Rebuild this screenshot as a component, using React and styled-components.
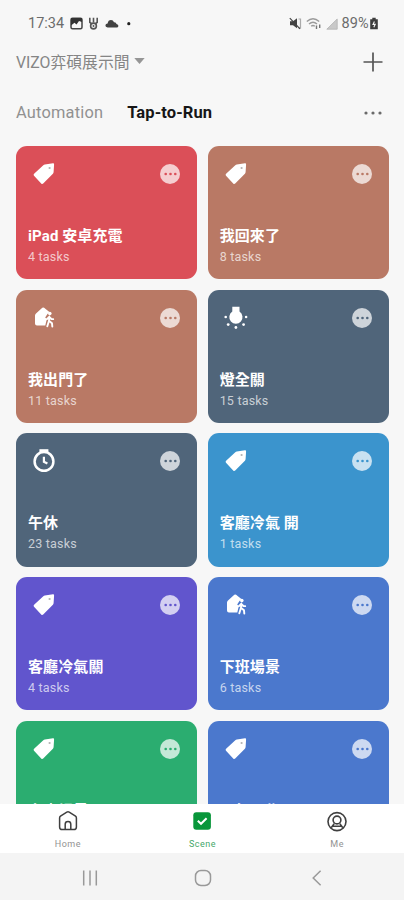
import styled, { createGlobalStyle } from "styled-components";

const GlobalStyle = createGlobalStyle`
  * {
    box-sizing: border-box;
  }

  body {
    margin: 0;
    background-color: #f7f7f7;
    font-family: Roboto, "Noto Sans CJK TC", sans-serif;
  }

  button {
    padding: 0;
    border: none;
    background: none;
    font-family: inherit;
    cursor: pointer;
  }

  svg {
    display: block;
    flex-shrink: 0;
  }
`;

const Screen = styled.div`
  width: 404px;
  height: 900px;
  display: flex;
  flex-direction: column;
  overflow: hidden;
  background-color: #f7f7f7;
`;

const StatusBar = styled.div`
  height: 46px;
  padding: 1px 25px 0 28px;
  display: flex;
  align-items: center;
  justify-content: space-between;
  color: #6c6c6c;
  font-size: 14.5px;
`;

const StatusGroup = styled.div`
  display: flex;
  align-items: center;
  gap: ${(props) => props.$gap}px;
`;

const Header = styled.header`
  height: 33px;
  padding: 0 21px 2px 16px;
  display: flex;
  align-items: center;
  justify-content: space-between;
`;

const HomeName = styled.button`
  padding-top: 2px;
  display: flex;
  align-items: center;
  gap: 5px;
  color: #858585;
  font-size: 15.8px;
  line-height: 24px;
`;

const Tabs = styled.nav`
  height: 67px;
  padding: 0 22px 0 16px;
  display: flex;
  align-items: center;
`;

const Tab = styled.button`
  margin-right: 24px;
  font-size: ${(props) => (props.$active ? "16.5px" : "16.4px")};
  line-height: 20px;
  letter-spacing: ${(props) => (props.$active ? "0.1px" : "0.2px")};
  font-weight: ${(props) => (props.$active ? 700 : 400)};
  color: ${(props) => (props.$active ? "#161616" : "#919191")};
`;

const TabsMore = styled.button`
  margin-left: auto;
  color: #6a6a6a;
`;

const Scenes = styled.main`
  flex: 1;
  min-height: 0;
  overflow: hidden;
  padding: 0 15px 0 16px;
  display: grid;
  grid-template-columns: 1fr 1fr;
  grid-auto-rows: 133.4px;
  gap: 10.3px;
`;

const Card = styled.article`
  padding: 15px 17px 0 12px;
  border-radius: 11px;
  background-color: ${(props) => props.$color};
  color: #ffffff;
`;

const CardTop = styled.div`
  height: 26px;
  padding-left: 4px;
  display: flex;
  align-items: center;
  justify-content: space-between;
`;

const MoreButton = styled.button`
  width: 20px;
  height: 20px;
  border-radius: 50%;
  display: flex;
  align-items: center;
  justify-content: center;
  background-color: rgba(255, 255, 255, 0.72);
  color: ${(props) => props.$color};
`;

const CardTitle = styled.h3`
  margin: 38px 0 0;
  font-size: 15px;
  line-height: 22px;
  letter-spacing: 0.1px;
  font-weight: 700;
  white-space: nowrap;
`;

const CardTasks = styled.p`
  margin: 2px 0 0;
  font-size: 12.5px;
  line-height: 16px;
  letter-spacing: 0.2px;
  color: rgba(255, 255, 255, 0.7);
`;

const TabBar = styled.footer`
  height: 49px;
  display: grid;
  grid-template-columns: repeat(3, 1fr);
  background-color: #ffffff;
`;

const TabBarItem = styled.button`
  padding: 6px 0 0 1px;
  display: flex;
  flex-direction: column;
  align-items: center;
  gap: 6px;
  font-size: 9px;
  line-height: 12px;
  letter-spacing: 0.5px;
  color: ${(props) => (props.$active ? "#45a76a" : "#929292")};
`;

const SystemNav = styled.div`
  height: 47px;
  padding: 2px 32px 0 34px;
  display: grid;
  grid-template-columns: repeat(3, 1fr);
  place-items: center;
  background-color: #f4f4f4;
`;

const TagIcon = () => (
  <svg width="24" height="24" viewBox="0 0 24 24">
    <path
      fill="#fff"
      d="M12.8 2.6 L21 1.3 Q22.2 1.2 22.1 2.5 L21.6 10 Q21.5 11 20.9 11.7 L11.2 21.6 Q10.2 22.5 9.2 21.5 L2 13.8 Q1.1 12.8 2.1 11.8 L11.3 3.3 Q12 2.7 12.8 2.6Z"
    />
    <circle cx="17.6" cy="6" r="1.1" fill="#000" fillOpacity="0.3" />
  </svg>
);

const LeaveIcon = () => (
  <svg width="24" height="24" viewBox="0 0 24 24">
    <path
      fill="#fff"
      d="M10.3 1.8 Q11.2 1 12.1 1.8 L17.4 6 L15.3 8.2 L13.2 11.4 L14.8 13 L13.3 19.5 H5 Q3 19.5 3 17.5 V9.5 Q3 8.3 4 7.4Z"
    />
    <circle cx="17.8" cy="7.6" r="1.8" fill="#fff" />
    <path
      d="M17.3 10.7 L17 14.7 L15.3 20.3 M17.2 15 L20 17.3 L20.3 20.5 M14.9 13.2 L17.2 10.8 L19.4 13 L21.2 13.1"
      fill="none"
      stroke="#fff"
      strokeWidth="1.9"
      strokeLinecap="round"
      strokeLinejoin="round"
    />
  </svg>
);

const BulbIcon = () => (
  <svg width="24" height="24" viewBox="0 0 24 24">
    <path fill="#fff" d="M8.3 0.7 H15.5 V5.6 A6.6 6.6 0 1 1 8.3 5.6Z" />
    <g fill="#fff">
      <circle cx="1.7" cy="11" r="1.3" />
      <circle cx="22.1" cy="11" r="1.3" />
      <circle cx="4.2" cy="18.6" r="1.4" />
      <circle cx="19.6" cy="18.6" r="1.4" />
      <circle cx="11.9" cy="21.5" r="1.4" />
    </g>
  </svg>
);

const ClockIcon = () => (
  <svg width="24" height="24" viewBox="0 0 24 24">
    <path fill="#fff" d="M7.4 0.2 H16.4 V3.6 H7.4Z" />
    <circle cx="12" cy="12.4" r="9.4" fill="none" stroke="#fff" strokeWidth="2.5" />
    <path d="M11.9 7.8 V12.8 L15.4 14.6" fill="none" stroke="#fff" strokeWidth="2.2" />
  </svg>
);

const Dots = ({ width = 13, r = 1.3, gap = 4.8 }) => (
  <svg width={width} height="4" viewBox={`${-width / 2} -2 ${width} 4`} fill="currentColor">
    <circle cx={-gap} r={r} />
    <circle r={r} />
    <circle cx={gap} r={r} />
  </svg>
);

const icons = {
  tag: TagIcon,
  leave: LeaveIcon,
  bulb: BulbIcon,
  clock: ClockIcon,
};

const scenes = [
  { title: "iPad 安卓充電", tasks: 4, color: "#db4f58", icon: "tag" },
  { title: "我回來了", tasks: 8, color: "#b97965", icon: "tag" },
  { title: "我出門了", tasks: 11, color: "#b97965", icon: "leave" },
  { title: "燈全關", tasks: 15, color: "#50657a", icon: "bulb" },
  { title: "午休", tasks: 23, color: "#50657a", icon: "clock" },
  { title: "客廳冷氣 開", tasks: 1, color: "#3b94cd", icon: "tag" },
  { title: "客廳冷氣關", tasks: 4, color: "#6155cd", icon: "tag" },
  { title: "下班場景", tasks: 6, color: "#4b78cd", icon: "leave" },
  { title: "上班場景", color: "#2bad70", icon: "tag" },
  { title: "下午工作", color: "#4b78cd", icon: "tag" },
];

const SceneCard = ({ title, tasks, color, icon }) => {
  const Icon = icons[icon];
  return (
    <Card $color={color}>
      <CardTop>
        <Icon />
        <MoreButton $color={color}>
          <Dots />
        </MoreButton>
      </CardTop>
      <CardTitle>{title}</CardTitle>
      {tasks && <CardTasks>{tasks} tasks</CardTasks>}
    </Card>
  );
};

const Status = () => (
  <StatusBar>
    <StatusGroup $gap={5.5}>
      <span>17:34</span>
      <svg width="13" height="13" viewBox="0 0 13 13">
        <rect x="1" y="1.2" width="11" height="10.6" rx="1.5" fill="#f7f7f7" stroke="#444" strokeWidth="1.5" />
        <path d="M1 1 H12 V5 L9 4 L6.5 7.5 L4.5 5.8 L1 8.5Z" fill="#333" />
      </svg>
      <svg width="11" height="13" viewBox="0 0 11 13">
        <path d="M1.8 0.7 V5.4 L4 7 M9.2 0.7 V5.4 L7 7 M5.5 0.7 V5.6" fill="none" stroke="#555" strokeWidth="1.6" />
        <circle cx="5.5" cy="9" r="2.9" fill="#eee" stroke="#555" strokeWidth="1.6" />
        <circle cx="5.5" cy="9" r="0.9" fill="#555" />
      </svg>
      <svg width="14" height="13" viewBox="0 0 14 13">
        <path d="M2.6 10.5 Q0.3 10.4 0.4 8.3 Q0.6 6.4 2.6 6.4 Q3.2 3 6 3 Q8.2 3 9 5.2 Q11.2 5 11.5 7 Q13.5 7.3 13.4 9 Q13.2 10.5 11.7 10.5Z" fill="#414141" />
      </svg>
      <svg width="12" height="13" viewBox="0 0 12 13">
        <circle cx="4.8" cy="6.7" r="1.6" fill="#222" />
      </svg>
    </StatusGroup>
    <StatusGroup $gap={4}>
      <svg width="13" height="13" viewBox="0 0 13 13">
        <path d="M1 4.3 H4 L8 1.3 V11.3 L4 8.3 H1Z" fill="#444" />
        <path d="M9.5 2 H11.5 V10.8 H9.5" fill="none" stroke="#aaa" strokeWidth="1.2" />
        <path d="M0.8 1.2 L11 11.8" stroke="#444" strokeWidth="1.2" />
      </svg>
      <svg width="16" height="13" viewBox="0 0 16 13">
        <path d="M0.8 4.5 Q7 -1 13.2 4.5 M3 7 Q7 3.5 11 7 M5.2 9.2 Q7 7.6 8.8 9.2" fill="none" stroke="#9b9b9b" strokeWidth="1.4" />
        <path d="M10.5 12 V8.5 M13.7 7.5 V11" stroke="#777" strokeWidth="1.4" />
      </svg>
      <svg width="12" height="12" viewBox="0 0 12 12">
        <path d="M0.8 11.2 L11.2 1 V11.2Z" fill="#c9c9c9" stroke="#b2b2b2" strokeWidth="0.8" />
      </svg>
      <StatusGroup $gap={0.5}>
        <span>89%</span>
        <svg width="10" height="13" viewBox="0 0 10 13">
          <path d="M3.3 0.8 H6.7 V2.2 H8.8 V12.3 H1.2 V2.2 H3.3Z" fill="#3d3d3d" />
          <path d="M5.4 4.4 L4 7.4 H6.2 L4.8 10.2" fill="none" stroke="#f7f7f7" strokeWidth="1.1" />
        </svg>
      </StatusGroup>
    </StatusGroup>
  </StatusBar>
);

const App = () => {
  return (
    <>
      <GlobalStyle />
      <Screen>
        <Status />
        <Header>
          <HomeName>
            <span>VIZO弈碩展示間</span>
            <svg width="11" height="9" viewBox="0 0 11 9">
              <path d="M0.3 0 H10.7 L5.5 6Z" fill="#969696" />
            </svg>
          </HomeName>
          <svg width="20" height="20" viewBox="0 0 20 20">
            <path d="M10 0.5 V19.5 M0.5 10 H19.5" stroke="#555" strokeWidth="1.7" />
          </svg>
        </Header>
        <Tabs>
          <Tab>Automation</Tab>
          <Tab $active>Tap-to-Run</Tab>
          <TabsMore>
            <Dots width={18} r={1.6} gap={7} />
          </TabsMore>
        </Tabs>
        <Scenes>
          {scenes.map((scene) => (
            <SceneCard key={scene.title} {...scene} />
          ))}
        </Scenes>
        <TabBar>
          <TabBarItem>
            <svg width="22" height="22" viewBox="0 0 22 22" fill="none" stroke="#3f3f3f" strokeWidth="1.5">
              <path d="M2.6 8 Q2.6 6.8 3.5 6.1 L9.8 2.2 Q11 1.5 12.2 2.2 L18.5 6.1 Q19.4 6.8 19.4 8 V17 Q19.4 19.6 16.8 19.6 H5.2 Q2.6 19.6 2.6 17Z" />
              <path d="M8.2 19.4 V14.2 Q8.2 11.6 11 11.6 Q13.8 11.6 13.8 14.2 V19.4" />
            </svg>
            Home
          </TabBarItem>
          <TabBarItem $active>
            <svg width="22" height="22" viewBox="0 0 22 22">
              <rect x="2.3" y="2.3" width="17.6" height="17.4" rx="3" fill="#08963a" />
              <path d="M6.8 10.8 L10 13.8 L15.6 8.2" fill="none" stroke="#fff" strokeWidth="2" />
            </svg>
            Scene
          </TabBarItem>
          <TabBarItem>
            <svg width="22" height="22" viewBox="0 0 22 22" fill="none" stroke="#3f3f3f" strokeWidth="1.6">
              <circle cx="11" cy="11.6" r="9" />
              <circle cx="11" cy="10" r="3.9" />
              <path d="M5.2 17.8 L8.2 13.6 M16.8 17.8 L13.8 13.6 M7.2 16.3 H14.8" />
            </svg>
            Me
          </TabBarItem>
        </TabBar>
        <SystemNav>
          <svg width="18" height="18" viewBox="0 0 18 18">
            <path d="M2.7 1.5 V16.5 M9 1.5 V16.5 M15.3 1.5 V16.5" stroke="#999" strokeWidth="1.5" />
          </svg>
          <svg width="18" height="18" viewBox="0 0 18 18">
            <rect x="1.5" y="1.5" width="15" height="15" rx="5.5" fill="none" stroke="#999" strokeWidth="1.5" />
          </svg>
          <svg width="18" height="18" viewBox="0 0 18 18">
            <path d="M13.6 1.8 L6.2 9 L13.6 16.2" fill="none" stroke="#999" strokeWidth="1.5" />
          </svg>
        </SystemNav>
      </Screen>
    </>
  );
};

export default App;
